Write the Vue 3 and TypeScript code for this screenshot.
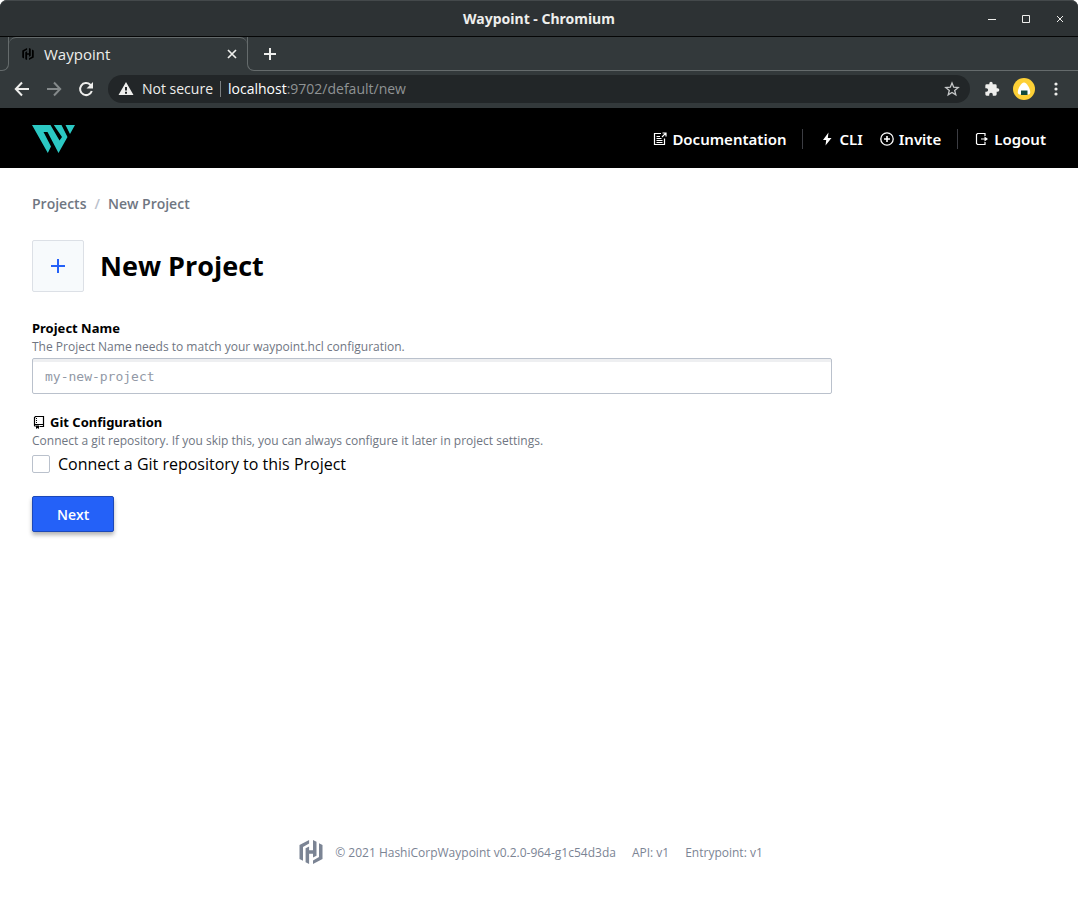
<script setup lang="ts">
import { ref } from 'vue'

const projectName = ref('')
const connectGit = ref(false)
const versions: string[] = ['API: v1', 'Entrypoint: v1']
</script>

<template>
  <div class="window">
    <header class="chrome">
      <div class="titlebar">
        <span class="window-title">Waypoint - Chromium</span>
        <div class="window-buttons">
          <button type="button" aria-label="Minimize">
            <svg width="10" height="10" viewBox="0 0 10 10"><path d="M1 5.500h8" /></svg>
          </button>
          <button type="button" aria-label="Maximize">
            <svg width="10" height="10" viewBox="0 0 10 10"><path d="M1.500 1.500h7v7h-7z" /></svg>
          </button>
          <button type="button" aria-label="Close">
            <svg width="10" height="10" viewBox="0 0 10 10"><path d="M2 2l6 6m0-6l-6 6" /></svg>
          </button>
        </div>
      </div>
      <div class="tabstrip">
        <div class="strip-edge"></div>
        <div class="tab">
          <svg class="favicon" width="12" height="12" viewBox="0 0 24 24">
            <path d="M10.100 0L.5 5.100V18.900L4 20.800V7L10.100 3.600ZM14 0V10.300H10.100V6.500L6.600 8.300V22.300L10.100 24V13.700H14V17.500L17.500 15.700V1.700ZM14 24L23.500 18.900V5.100L20 3.200V17L14 20.400Z" />
          </svg>
          <span class="tab-title">Waypoint</span>
          <button type="button" aria-label="Close tab">
            <svg width="10" height="10" viewBox="0 0 10 10"><path class="line" d="M1 1l8 8m0-8L1 9" /></svg>
          </button>
        </div>
        <div class="strip-rest">
          <button type="button" aria-label="New tab">
            <svg width="14" height="14" viewBox="0 0 14 14"><path class="line" d="M7 1v12M1 7h12" /></svg>
          </button>
        </div>
      </div>
      <div class="toolbar">
        <button type="button" aria-label="Back">
          <svg width="16" height="16" viewBox="0 0 16 16"><path class="line" d="M15 8H2M8 1.500L1.800 8 8 14.500" /></svg>
        </button>
        <button type="button" class="dim" aria-label="Forward">
          <svg width="16" height="16" viewBox="0 0 16 16"><path class="line" d="M1 8h13M8 1.500L14.200 8 8 14.500" /></svg>
        </button>
        <button type="button" aria-label="Reload">
          <svg width="16" height="16" viewBox="0 0 16 16"><path class="line" d="M13.800 10A6 6 0 1 1 12.300 3.800L14 5.500" /><path class="solid" d="M15 1v6.500H8.500z" /></svg>
        </button>
        <div class="address">
          <svg width="16" height="14" viewBox="0 0 16 14"><path class="solid" fill-rule="evenodd" d="M8 0l7.500 13H.5zM7 5v3.500h2V5zm0 4.700v2h2v-2z" /></svg>
          <span class="secure">Not secure</span>
          <span class="url"><b>localhost</b>:9702/default/new</span>
          <button type="button" class="star" aria-label="Bookmark">
            <svg width="16" height="16" viewBox="0 0 16 16"><path d="M8 2l1.700 4.200 4.500.3-3.500 2.900 1.100 4.400L8 11.400l-3.800 2.400 1.100-4.400-3.500-2.900 4.500-.3z" /></svg>
          </button>
        </div>
        <button type="button" aria-label="Extensions">
          <svg width="16" height="16" viewBox="0 0 24 24"><path class="solid" d="M20.500 11H19V7a2 2 0 0 0-2-2h-4V3.500a2.500 2.500 0 0 0-5 0V5H4a2 2 0 0 0-2 2v3.800h1.500a2.700 2.700 0 0 1 0 5.400H2V20a2 2 0 0 0 2 2h3.800v-1.500a2.700 2.700 0 0 1 5.400 0V22H17a2 2 0 0 0 2-2v-4h1.500a2.500 2.500 0 0 0 0-5z" /></svg>
        </button>
        <button type="button" aria-label="Profile">
          <svg width="22" height="22" viewBox="0 0 22 22"><circle cx="11" cy="11" r="11" fill="#fdd036" /><path d="M11 4.500c2.800 0 6.500 6.500 6.200 10-.2 1.500-1 2-2 2H6.800c-1 0-1.800-.5-2-2C4.500 11 8.200 4.500 11 4.500z" fill="#fff" /><path d="M8 12.500h6.500V17H8z" fill="#124a3f" /></svg>
        </button>
        <button type="button" aria-label="Menu">
          <svg width="4" height="14" viewBox="0 0 4 14"><g class="solid"><circle cx="2" cy="2" r="1.600" /><circle cx="2" cy="7" r="1.600" /><circle cx="2" cy="12" r="1.600" /></g></svg>
        </button>
      </div>
    </header>

    <nav class="navbar">
      <a class="brand" href="#" aria-label="Waypoint">
        <svg width="43" height="28" viewBox="0 0 43 28"><path d="M0 0h18.500l9 15.500 2.500-3.500L21.800 0h7.700l6 12L26.500 28 15.500 7h-4l7.500 14.500L15.800 28zM33.500 0H43l-5 9z" /></svg>
      </a>
      <div class="nav-links">
        <a href="#">
          <svg width="14" height="14" viewBox="0 0 14 14"><path d="M8 1.500H1.500v11h10V6.500M3.500 4.500h3.500M3.500 6.500h5M3.500 8.500h6M3.500 10.500h6M9.500 1h3.500v3.500M12.800 1.200L9 5" stroke-width="1.200" /></svg>
          Documentation
        </a>
        <span class="rule"></span>
        <a href="#">
          <svg width="14" height="14" viewBox="0 0 14 14"><path class="fill" d="M8.500 .5L3 8h3.200L5.500 13.500 11.500 6H7.800z" /></svg>
          CLI
        </a>
        <a href="#">
          <svg width="14" height="14" viewBox="0 0 14 14"><circle cx="7" cy="7" r="6.200" stroke-width="1.300" /><path d="M7 4v6M4 7h6" stroke-width="1.600" /></svg>
          Invite
        </a>
        <span class="rule"></span>
        <a href="#">
          <svg width="14" height="14" viewBox="0 0 14 14"><path d="M10 4V1.500H2.500l-1 1v9l1 1H10V10M6 7h5" stroke-width="1.200" /><path class="fill" d="M9.500 4.500L13 7 9.500 9.500z" /></svg>
          Logout
        </a>
      </div>
    </nav>

    <main class="content">
      <nav class="crumbs" aria-label="Breadcrumb">
        <a href="#">Projects</a><i>/</i><a href="#">New Project</a>
      </nav>
      <div class="heading">
        <div class="tile">
          <svg width="16" height="16" viewBox="0 0 16 16"><path d="M8 1v14M1 8h14" /></svg>
        </div>
        <h1>New Project</h1>
      </div>
      <form @submit.prevent>
        <label class="label" for="name">Project Name</label>
        <p class="help">The Project Name needs to match your waypoint.hcl configuration.</p>
        <input id="name" v-model="projectName" class="text" type="text" placeholder="my-new-project" />

        <h2 class="label git">
          <svg width="14" height="14" viewBox="0 0 14 14"><path d="M3.500 11.500l-1-1V2.500l1-1h8v10H7.500M3 9.500h8.500" stroke-width="1.200" /><path d="M4.500 3v1m0 1v1m0 1v1" /><path class="fill" d="M4 10.500h3V14l-1.500-1L4 14z" /></svg>
          Git Configuration
        </h2>
        <p class="help">Connect a git repository. If you skip this, you can always configure it later in project settings.</p>
        <label class="check"><input v-model="connectGit" type="checkbox" />Connect a Git repository to this Project</label>
        <button class="next" type="submit">Next</button>
      </form>
    </main>

    <footer class="footer">
      <svg width="24" height="24" viewBox="0 0 24 24">
        <path d="M10.100 0L.5 5.100V18.900L4 20.800V7L10.100 3.600ZM14 0V10.300H10.100V6.500L6.600 8.300V22.300L10.100 24V13.700H14V17.500L17.500 15.700V1.700ZM14 24L23.500 18.900V5.100L20 3.200V17L14 20.400Z" />
      </svg>
      <span>© 2021 HashiCorp<span>Waypoint v0.2.0-964-g1c54d3da</span></span>
      <span v-for="v in versions" :key="v">{{ v }}</span>
    </footer>
  </div>
</template>

<style>
body {
  margin: 0;
  background: #fff;
}
</style>

<style scoped>
.window {
  display: flex;
  flex-direction: column;
  min-height: 100vh;
  font-family: "Open Sans", "Noto Sans", sans-serif;
  font-size: 16px;
  color: #000;
}
* {
  box-sizing: border-box;
}
a {
  color: inherit;
  text-decoration: none;
}
button {
  padding: 0;
  border: 0;
  background: none;
  color: inherit;
  font: inherit;
}
svg {
  display: block;
  flex: none;
}

.chrome {
  background: #33393b;
  color: #eeeeec;
  border-radius: 7px 7px 0 0;
  border-bottom: 1px solid #000;
}
.chrome button {
  display: grid;
  place-items: center;
  width: 32px;
  height: 28px;
}
.line {
  fill: none;
  stroke: currentColor;
  stroke-width: 2;
}
.tab .line {
  stroke-width: 1.700;
}
.solid {
  fill: currentColor;
}
.titlebar {
  display: grid;
  grid-template-columns: 1fr auto 1fr;
  align-items: center;
  height: 37px;
  border-top: 1px solid #44494b;
  border-bottom: 1px solid #050606;
  border-radius: 7px 7px 0 0;
  background: #2d3234;
}
.window-title {
  grid-column: 2;
  font-family: "Noto Sans", sans-serif;
  font-size: 14px;
  font-weight: 700;
}
.window-buttons {
  display: flex;
  justify-content: flex-end;
  padding-right: 1px;
}
.window-buttons button {
  width: 34px;
}
.window-buttons path {
  fill: none;
  stroke: currentColor;
}
.tabstrip {
  display: flex;
  height: 34px;
}
.strip-edge {
  width: 9px;
  border-bottom: 1px solid #656b6c;
  border-right: 1px solid #656b6c;
  border-bottom-right-radius: 7px;
}
.tab {
  display: flex;
  align-items: center;
  width: 238px;
  padding: 0 0 2px 13px;
  border-top: 1px solid #656b6c;
  border-radius: 7px 7px 0 0;
}
.tab button {
  width: 30px;
}
.favicon {
  fill: #000;
}
.tab-title {
  flex: 1;
  margin-left: 10px;
  font-size: 15px;
}
.strip-rest {
  flex: 1;
  padding: 3px 0 0 6px;
  border-left: 1px solid #656b6c;
  border-bottom: 1px solid #656b6c;
  border-bottom-left-radius: 7px;
}
.toolbar {
  display: flex;
  align-items: center;
  height: 37px;
  padding: 0 6px 2px;
}
.toolbar .dim {
  color: #858a8b;
}
.address {
  display: flex;
  flex: 1;
  align-items: center;
  height: 28px;
  margin: 0 6px;
  padding: 0 2px 0 10px;
  border-radius: 14px;
  background: #222628;
  font-size: 14px;
}
.secure {
  margin-left: 8px;
  padding-right: 7px;
  border-right: 1px solid #7a7e80;
  line-height: 16px;
}
.url {
  flex: 1;
  margin-left: 7px;
  color: #8f9394;
}
.url b {
  color: #fff;
  font-weight: 400;
}
.star path {
  fill: none;
  stroke: #c6c8c9;
  stroke-width: 1.300;
}

.navbar {
  display: flex;
  align-items: center;
  justify-content: space-between;
  height: 59px;
  padding: 0 32px;
  background: #000;
  color: #fff;
}
.brand svg {
  fill: #2bc8c3;
}
.nav-links {
  display: flex;
  align-items: center;
  font-family: "Noto Sans", sans-serif;
  font-size: 15px;
  font-weight: 600;
  line-height: 20px;
}
.nav-links a {
  display: flex;
  align-items: center;
  gap: 5px;
}
.nav-links a + a {
  margin-left: 17px;
}
.nav-links svg {
  fill: none;
  stroke: #fff;
}
.nav-links .fill,
.git .fill {
  fill: currentColor;
  stroke: none;
}
.rule {
  width: 1px;
  height: 20px;
  margin: 0 17px 0 16px;
  background: #3c3d43;
}

.content {
  flex: 1;
  padding: 26px 32px;
}
.crumbs {
  display: flex;
  gap: 8px;
  color: #6f7682;
  font-size: 14px;
  font-weight: 600;
  line-height: 20px;
}
.crumbs i {
  color: #bac1cc;
  font-style: normal;
}
.heading {
  display: flex;
  align-items: center;
  gap: 16px;
  margin: 26px 0;
}
.tile {
  display: grid;
  place-items: center;
  width: 52px;
  height: 52px;
  border: 1px solid #dce0e6;
  border-radius: 2px;
  background: #f7fafc;
}
.tile path {
  stroke: #2461f8;
  stroke-width: 2;
}
h1 {
  margin: 0;
  font-size: 27px;
  line-height: 36px;
}
form {
  max-width: 800px;
}
.label {
  display: flex;
  align-items: center;
  gap: 4px;
  margin: 0;
  font-family: "Noto Sans", sans-serif;
  font-size: 13px;
  font-weight: 700;
  line-height: 20px;
}
.git {
  margin-top: 18px;
}
.git svg {
  fill: none;
  stroke: #000;
}
.help {
  margin: 0;
  color: #6f7682;
  font-size: 12px;
  font-weight: 500;
  line-height: 18px;
}
.text {
  display: block;
  width: 100%;
  height: 36px;
  margin-top: 2px;
  padding: 0 12px;
  border: 1px solid #bac1cc;
  border-radius: 2px;
  box-shadow: inset 0 3px #eeeff1;
  font: 13px "DejaVu Sans Mono", monospace;
}
.text::placeholder {
  color: #9299a6;
}
.check {
  display: flex;
  align-items: center;
  gap: 8px;
  margin-top: 2px;
  line-height: 24px;
}
.check input {
  width: 18px;
  height: 18px;
  margin: 0;
  border: 1px solid #bac1cc;
  border-radius: 2px;
  background: #fff;
  appearance: none;
}
.check input:checked {
  background: #2461f8;
}
.next {
  height: 36px;
  margin-top: 20px;
  padding: 0 24px;
  border: 1px solid #1c48b8;
  border-radius: 2px;
  background: #2461f8;
  box-shadow: 0 3px 4px #0000004d;
  color: #fff;
  font-size: 14px;
  font-weight: 600;
}
.footer {
  display: flex;
  align-items: center;
  justify-content: center;
  gap: 16px;
  padding: 0 16px 36px 0;
  color: #7b8494;
  font-size: 12px;
}
.footer svg {
  margin-right: -4px;
  fill: #7b8494;
}
</style>
